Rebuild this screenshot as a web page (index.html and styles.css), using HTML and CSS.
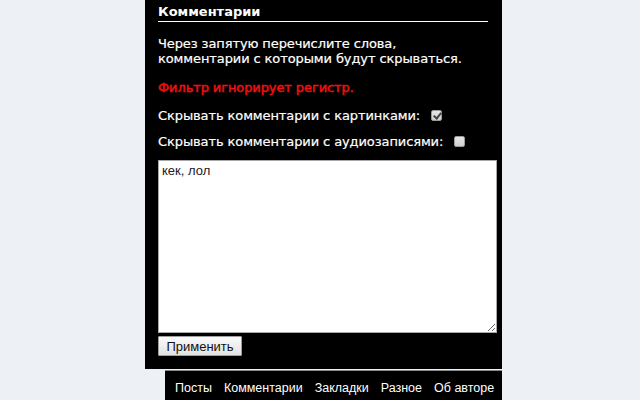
FILE: index.html
```html
<!DOCTYPE html>
<html lang="ru">
<head>
<meta charset="utf-8">
<link rel="stylesheet" href="styles.css">
</head>
<body>
<div class="page">
  <div class="panel">
    <h2 class="title">Комментарии</h2>
    <p class="desc">Через запятую перечислите слова,<br>комментарии с которыми будут скрываться.</p>
    <p class="warn">Фильтр игнорирует регистр.</p>
    <label class="opt">Скрывать комментарии с картинками: <input type="checkbox" class="cb" checked></label>
    <label class="opt">Скрывать комментарии с аудиозаписями: <input type="checkbox" class="cb"></label>
    <textarea class="words">кек, лол</textarea>
    <button class="apply">Применить</button>
  </div>
  <nav class="nav">
    <a class="nav-item">Посты</a>
    <a class="nav-item">Комментарии</a>
    <a class="nav-item">Закладки</a>
    <a class="nav-item">Разное</a>
    <a class="nav-item">Об авторе</a>
  </nav>
</div>
</body>
</html>
```
FILE: styles.css
```css
html, body {
  margin: 0;
  padding: 0;
  background: #edf0f4;
  height: 100%;
  overflow: hidden;
}
.page {
  width: 357px;
  margin-left: 145px;
  display: flex;
  flex-direction: column;
}
.panel {
  background: #000;
  color: #fff;
  padding: 0 5px 13px 13px;
  height: 356px;
  font-family: "DejaVu Sans", Verdana, sans-serif;
  font-size: 13px;
  letter-spacing: -0.1px;
  display: flex;
  flex-direction: column;
  align-items: flex-start;
}
.title {
  margin: 3px 0 0 0;
  width: 330px;
  font-size: 13px;
  font-weight: bold;
  letter-spacing: 0;
  line-height: 17px;
  padding-bottom: 1px;
  border-bottom: 1px solid #fff;
}
.desc {
  margin: 14px 0 0 0;
  line-height: 15px;
  -webkit-text-stroke: 0.2px #fff;
}
.warn {
  margin: 14px 0 0 0;
  line-height: 15px;
  color: #f01010;
  -webkit-text-stroke: 0.5px #f01010;
}
.opt {
  display: flex;
  align-items: center;
  margin-top: 11px;
  line-height: 15px;
  white-space: pre;
  -webkit-text-stroke: 0.2px #fff;
}
.warn + .opt { margin-top: 13px; }
.cb {
  appearance: none;
  -webkit-appearance: none;
  width: 11px;
  height: 11px;
  margin: 0 0 0 7px;
  border: 1px solid #9a9a9a;
  border-radius: 2px;
  background: linear-gradient(#e6e6e6, #cfcfcf);
  position: relative;
}
.cb:checked::after {
  content: "";
  position: absolute;
  left: 3px;
  top: 0px;
  width: 3px;
  height: 6px;
  border-right: 2px solid #444;
  border-bottom: 2px solid #444;
  transform: rotate(40deg);
}
.words {
  margin-top: 11px;
  width: 339px;
  height: 173px;
  box-sizing: border-box;
  border: 1px solid #a9a9a9;
  padding: 2px 3px;
  font-family: "Liberation Sans", Arial, sans-serif;
  font-size: 13px;
  letter-spacing: 0;
  color: #222;
  background: #fff;
  resize: both;
}
.apply {
  margin-top: 3px;
  width: 84px;
  height: 20px;
  padding: 0;
  font-family: "Liberation Sans", Arial, sans-serif;
  font-size: 13px;
  color: #111;
  border: 1px solid #a0a0a0;
  border-radius: 1px;
  background: linear-gradient(#fafafa, #e2e2e2);
}
.nav {
  margin-top: 1px;
  margin-left: 20px;
  border-top: 1px solid #8a8a8a;
  background: #000;
  height: 40px;
  display: flex;
  padding-left: 10px;
  gap: 12px;
  font-family: "Liberation Sans", Arial, sans-serif;
  font-size: 12.5px;
  color: #fff;
  padding-top: 10px;
  box-sizing: border-box;
}
.nav-item {
  color: #fff;
  text-decoration: none;
}
```
